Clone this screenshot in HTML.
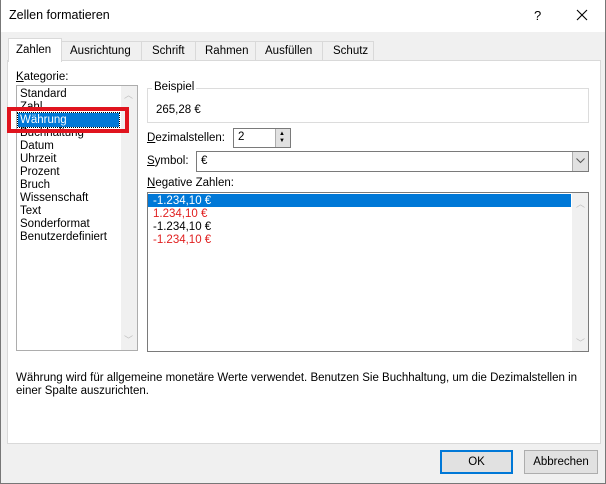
<!DOCTYPE html>
<html><head><meta charset="utf-8"><style>
*{margin:0;padding:0;box-sizing:border-box}
body{width:606px;height:484px;background:#f0f0f0;font-family:"Liberation Sans",sans-serif;font-size:11.5px;color:#000;position:relative;overflow:hidden}
.a{position:absolute;white-space:nowrap}
u{text-decoration:underline}
</style></head><body>
<div class="a" style="left:0;top:0;width:606px;height:32px;background:#fff"></div>
<div class="a" style="left:9px;top:8px;font-size:12.5px">Zellen formatieren</div>
<div class="a" style="left:534px;top:8px;font-size:13px">?</div>
<svg class="a" style="left:576px;top:9px" width="12" height="12"><path d="M1 1L11 11M11 1L1 11" stroke="#000" stroke-width="1.1"/></svg>
<div class="a" style="left:0;top:0;width:1px;height:484px;background:#777"></div>
<div class="a" style="left:605px;top:0;width:1px;height:484px;background:#777"></div>
<!-- tabs -->
<div class="a" style="left:61px;top:41px;width:313px;height:20px;border:1px solid #d9d9d9;background:#f0f0f0"></div>
<div class="a" style="left:70px;top:45px">Ausrichtung</div>
<div class="a" style="left:141px;top:41px;width:1px;height:19px;background:#d9d9d9"></div>
<div class="a" style="left:152px;top:45px">Schrift</div>
<div class="a" style="left:195px;top:41px;width:1px;height:19px;background:#d9d9d9"></div>
<div class="a" style="left:205px;top:45px">Rahmen</div>
<div class="a" style="left:255px;top:41px;width:1px;height:19px;background:#d9d9d9"></div>
<div class="a" style="left:265px;top:45px">Ausfüllen</div>
<div class="a" style="left:322px;top:41px;width:1px;height:19px;background:#d9d9d9"></div>
<div class="a" style="left:333px;top:45px">Schutz</div>
<div class="a" style="left:7px;top:60px;width:594px;height:384px;background:#fff;border:1px solid #d9d9d9"></div>
<div class="a" style="left:8px;top:38px;width:54px;height:24px;background:#fff;border:1px solid #d9d9d9;border-bottom:none"></div>
<div class="a" style="left:16px;top:44px">Zahlen</div>
<!-- Kategorie -->
<div class="a" style="left:16px;top:71px"><u>K</u>ategorie:</div>
<div class="a" style="left:16px;top:85px;width:122px;height:266px;border:1px solid #adadad;background:#fff"></div>
<div class="a" style="left:121px;top:86px;width:16px;height:264px;background:#f0f0f0"></div>
<div class="a" style="left:124px;top:88px;color:#c0c0c0;font-size:9px">︿</div>
<div class="a" style="left:124px;top:333px;color:#c0c0c0;font-size:9px">﹀</div>
<div class="a" style="left:18px;top:113px;width:101px;height:14px;background:#0078d7;outline:1px dotted #000"></div>
<div class="a" style="left:20px;top:88px;line-height:13px">Standard<br>Zahl<br><span style="color:#fff">Währung</span><br>Buchhaltung<br>Datum<br>Uhrzeit<br>Prozent<br>Bruch<br>Wissenschaft<br>Text<br>Sonderformat<br>Benutzerdefiniert</div>
<div class="a" style="left:7px;top:107px;width:122px;height:26px;border:4px solid #e0141e"></div>
<!-- Beispiel -->
<div class="a" style="left:147px;top:88px;width:442px;height:35px;border:1px solid #dcdcdc"></div>
<div class="a" style="left:152px;top:81px;background:#fff;padding:0 2px">Beispiel</div>
<div class="a" style="left:156px;top:104px">265,28 €</div>
<div class="a" style="left:147px;top:132px"><u>D</u>ezimalstellen:</div>
<div class="a" style="left:233px;top:128px;width:58px;height:20px;border:1px solid #7a7a7a;background:#fff"></div>
<div class="a" style="left:238px;top:131px">2</div>
<div class="a" style="left:275px;top:129px;width:15px;height:18px;background:#e1e1e1;border-left:1px solid #adadad"></div>
<div class="a" style="left:279px;top:131px;font-size:6px;line-height:7px">▲<br>▼</div>
<div class="a" style="left:147px;top:155px"><u>S</u>ymbol:</div>
<div class="a" style="left:196px;top:151px;width:393px;height:21px;border:1px solid #7a7a7a;background:#fff"></div>
<div class="a" style="left:201px;top:155px">€</div>
<div class="a" style="left:572px;top:152px;width:16px;height:19px;background:#e1e1e1;border-left:1px solid #adadad"></div>
<svg class="a" style="left:576px;top:158px" width="9" height="6"><path d="M0.5 0.5L4.5 4.5L8.5 0.5" fill="none" stroke="#555"/></svg>
<div class="a" style="left:147px;top:177px"><u>N</u>egative Zahlen:</div>
<div class="a" style="left:147px;top:192px;width:442px;height:160px;border:1px solid #7a7a7a;background:#fff"></div>
<div class="a" style="left:572px;top:193px;width:16px;height:158px;background:#f0f0f0"></div>
<div class="a" style="left:576px;top:197px;color:#c0c0c0;font-size:9px">︿</div>
<div class="a" style="left:576px;top:336px;color:#c0c0c0;font-size:9px">﹀</div>
<div class="a" style="left:148px;top:194px;width:423px;height:13px;background:#0078d7"></div>
<div class="a" style="left:153px;top:195px;line-height:13px"><span style="color:#fff">-1.234,10 €</span><br><span style="color:#e02020">1.234,10 €</span><br>-1.234,10 €<br><span style="color:#e02020">-1.234,10 €</span></div>
<div class="a" style="left:16px;top:372px;line-height:13px">Währung wird für allgemeine monetäre Werte verwendet. Benutzen Sie Buchhaltung, um die Dezimalstellen in<br>einer Spalte auszurichten.</div>
<div class="a" style="left:440px;top:450px;width:73px;height:24px;border:2px solid #0078d7;background:#e1e1e1;text-align:center;line-height:20px">OK</div>
<div class="a" style="left:524px;top:450px;width:74px;height:24px;border:1px solid #adadad;background:#e1e1e1;text-align:center;line-height:22px">Abbrechen</div>
<div class="a" style="left:0;top:483px;width:606px;height:1px;background:#777"></div>
</body></html>
